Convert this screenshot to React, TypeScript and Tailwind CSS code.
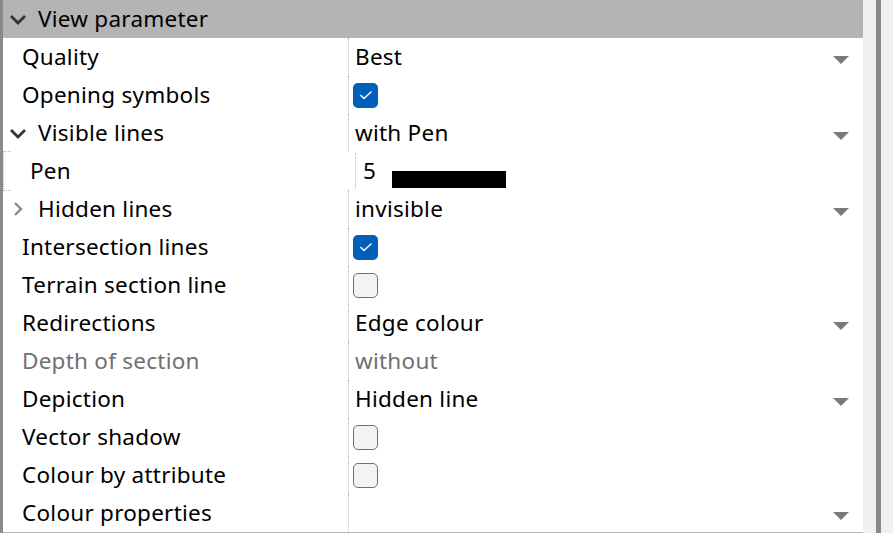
import { ReactNode } from 'react';

type Row = {
  label: string;
  value?: string;
  kind: 'select' | 'check' | 'pen' | 'text' | 'empty';
  checked?: boolean;
  expand?: 'open' | 'closed';
  muted?: boolean;
};

const rows: Row[] = [
  { label: 'Quality', value: 'Best', kind: 'select' },
  { label: 'Opening symbols', kind: 'check', checked: true },
  { label: 'Visible lines', value: 'with Pen', kind: 'select', expand: 'open' },
  { label: 'Pen', value: '5', kind: 'pen' },
  { label: 'Hidden lines', value: 'invisible', kind: 'select', expand: 'closed' },
  { label: 'Intersection lines', kind: 'check', checked: true },
  { label: 'Terrain section line', kind: 'check', checked: false },
  { label: 'Redirections', value: 'Edge colour', kind: 'select' },
  { label: 'Depth of section', value: 'without', kind: 'text', muted: true },
  { label: 'Depiction', value: 'Hidden line', kind: 'select' },
  { label: 'Vector shadow', kind: 'check', checked: false },
  { label: 'Colour by attribute', kind: 'check', checked: false },
  { label: 'Colour properties', kind: 'empty' },
];

function ChevronDown({ className }: { className?: string }) {
  return (
    <svg width="18" height="11" viewBox="0 0 18 11" className={className}>
      <path d="M2 2 L9 9 L16 2" fill="none" stroke="currentColor" strokeWidth="2.8" />
    </svg>
  );
}

function ChevronRight({ className }: { className?: string }) {
  return (
    <svg width="10" height="16" viewBox="0 0 10 16" className={className}>
      <path d="M2 2 L8 8 L2 14" fill="none" stroke="currentColor" strokeWidth="2.4" />
    </svg>
  );
}

function Checkbox({ checked }: { checked?: boolean }) {
  if (checked) {
    return (
      <div className="w-[25px] h-[25px] rounded-[5px] bg-[#005fb8] flex items-center justify-center">
        <svg width="14" height="10" viewBox="0 0 14 10">
          <path d="M1.5 5 L5 8.5 L12.5 1.5" fill="none" stroke="white" strokeWidth="1.4" />
        </svg>
      </div>
    );
  }
  return <div className="w-[25px] h-[25px] rounded-[5px] bg-[#f3f3f3] border-[1.5px] border-[#6f6f6f]" />;
}

function DropArrow() {
  return (
    <svg width="16" height="8" viewBox="0 0 16 8" className="mr-[14px] mt-[6px]">
      <path d="M0 0 H16 L8 8 Z" fill="#7a7a7a" />
    </svg>
  );
}

function Value({ row }: { row: Row }): ReactNode {
  if (row.kind === 'pen') {
    return (
      <div className="flex h-full pl-[7px] py-[1px]">
        <div className="flex h-full flex-1 border-l border-dotted border-[#b8b8b8]">
          <span className="w-[36px] pl-[7px] self-center">{row.value}</span>
          <div className="mt-[18px] w-[114px] h-[17px] bg-black" />
        </div>
      </div>
    );
  }
  return (
    <div className="flex h-full items-center justify-between pl-[6px] border-l border-dotted border-[#b8b8b8]">
      {row.kind === 'check' ? (
        <div className="-ml-[2px]">
          <Checkbox checked={row.checked} />
        </div>
      ) : (
        <span className={row.muted ? 'text-[#707070]' : ''}>{row.value}</span>
      )}
      {(row.kind === 'select' || row.kind === 'empty') && <DropArrow />}
    </div>
  );
}

function Label({ row }: { row: Row }) {
  if (row.kind === 'pen') {
    return (
      <div className="flex h-full">
        <div className="w-[8px] my-[-1px] border-l border-y border-dotted border-[#b8b8b8]" />
        <span className="pl-[19px] self-center">{row.label}</span>
      </div>
    );
  }
  if (row.expand) {
    return (
      <div className="flex h-full items-center">
        <div className="w-[35px] flex">
          {row.expand === 'open' ? (
            <ChevronDown className="ml-[6px] text-[#333333]" />
          ) : (
            <ChevronRight className="ml-[10px] text-[#8a8a8a]" />
          )}
        </div>
        <span>{row.label}</span>
      </div>
    );
  }
  return (
    <div className={`flex h-full items-center pl-[19px] ${row.muted ? 'text-[#707070]' : ''}`}>
      {row.label}
    </div>
  );
}

export default function App() {
  return (
    <div
      className="w-[893px] h-[533px] flex bg-[#f0f0f0] text-black text-[22.5px] tracking-[0.25px] leading-none overflow-hidden"
      style={{ fontFamily: '"Noto Sans", "Open Sans", sans-serif' }}
    >
      <div className="w-[863px] h-full flex flex-col bg-white border-l-[3px] border-[#8a8a8a]">
        <div className="h-[38px] bg-[#b4b4b4] flex items-center shrink-0">
          <div className="w-[35px] flex">
            <ChevronDown className="ml-[6px] text-[#333333]" />
          </div>
          <span>View parameter</span>
        </div>
        <div className="flex-1 flex flex-col border-b-[2px] border-[#b4b4b4]">
          {rows.map((row) => (
            <div key={row.label} className="h-[38px] shrink-0 grid grid-cols-[345px_1fr]">
              <Label row={row} />
              <Value row={row} />
            </div>
          ))}
        </div>
      </div>
      <div className="flex-1 flex justify-center">
        <div className="w-[5px] h-full bg-[#888888]" />
      </div>
    </div>
  );
}
